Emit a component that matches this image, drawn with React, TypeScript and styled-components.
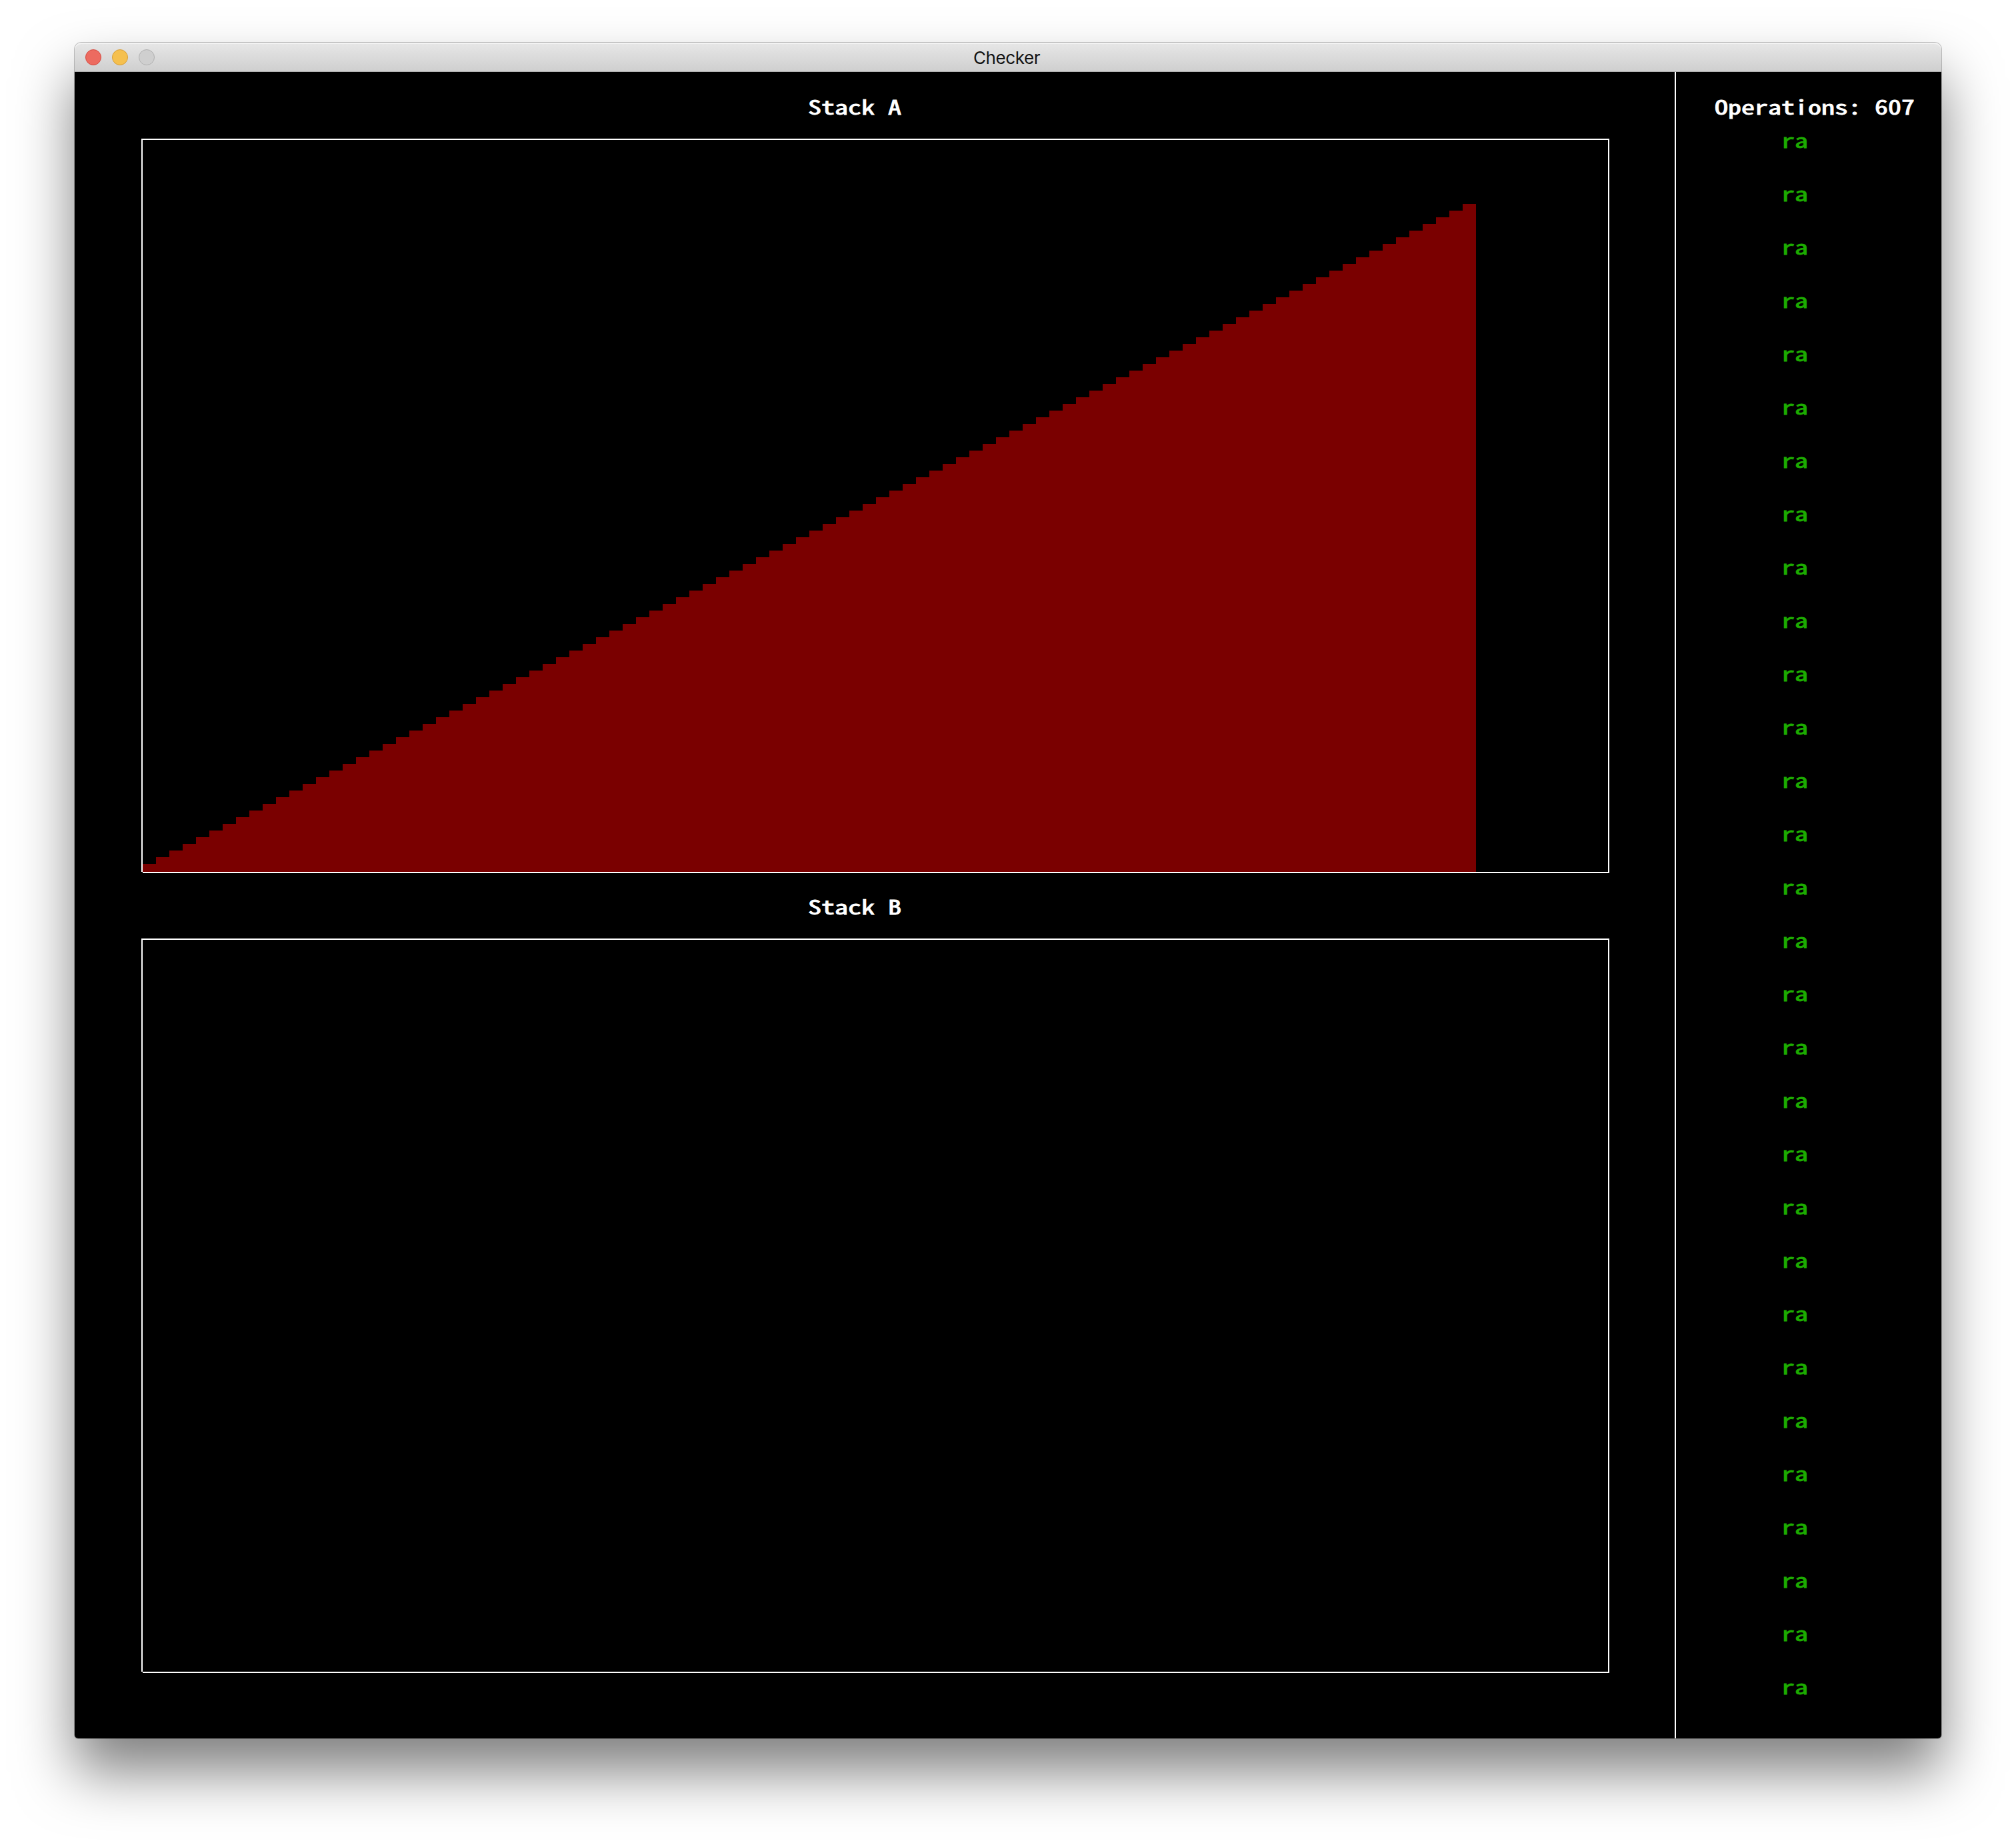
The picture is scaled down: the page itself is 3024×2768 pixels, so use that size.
import React from "react";
import styled, { createGlobalStyle } from "styled-components";

const GlobalStyle = createGlobalStyle`
  *, *::before, *::after { box-sizing: border-box; }
  body { margin: 0; background: #fff; }
`;

const Desktop = styled.div`
  width: 3024px;
  height: 2768px;
  padding: 64px 112px 160px;
  overflow: hidden;
  background: #fff;
`;

const Window = styled.main`
  display: flex;
  flex-direction: column;
  height: 2544px;
  border-radius: 10px 10px 5px 5px;
  box-shadow: 0 0 0 1px rgba(0, 0, 0, 0.24), 0 50px 86px rgba(0, 0, 0, 0.5);
`;

const TitleBar = styled.header`
  display: grid;
  grid-template-columns: 1fr auto 1fr;
  align-items: center;
  height: 44px;
  padding: 0 16px;
  border-radius: 10px 10px 0 0;
  border-bottom: 1px solid #adadad;
  background: linear-gradient(#e7e7e7, #cfcfcf);
  box-shadow: inset 0 2px 0 #f3f3f3;
`;

const Lights = styled.div`
  display: flex;
  gap: 16px;
`;

const Light = styled.span<{ $fill: string; $edge: string }>`
  width: 24px;
  height: 24px;
  border-radius: 50%;
  border: 1px solid ${(p) => p.$edge};
  background: ${(p) => p.$fill};
`;

const WindowTitle = styled.h1`
  margin: 0 4px 0 0;
  padding-top: 2px;
  font: 400 26px/40px Inter, "Liberation Sans", sans-serif;
  letter-spacing: -0.4px;
  color: #111;
`;

const Screen = styled.div`
  display: flex;
  height: 2500px;
  background: #000;
  border-radius: 0 0 5px 5px;
  overflow: hidden;
  font: 400 30px/30px "Noto Sans Mono CJK SC", "DejaVu Sans Mono", monospace;
  -webkit-text-stroke: 0.9px currentColor;
  white-space: pre;
`;

/* Terminal lettering: 15px cells widened to the 20px console grid. */
const Glyphs = styled.span`
  display: inline-block;
  vertical-align: top;
  transform: scaleX(1.3333);
  transform-origin: left top;
`;

const Stacks = styled.div`
  width: 2400px;
  padding-left: 100px;
`;

const StackSection = styled.section`
  height: 1200px;
`;

const StackTitle = styled.h2`
  height: 100px;
  margin: 0;
  padding: 36px 0 0 1000px;
  font: inherit;
  color: #fff;
`;

const Frame = styled.div`
  position: relative;
  display: flex;
  align-items: flex-end;
  width: 2202px;
  height: 1102px;
  border: 2px solid #fff;

  &::after {
    content: "";
    position: absolute;
    left: -2px;
    bottom: -2px;
    width: 2px;
    height: 2px;
    background: #000;
  }
`;

const Bar = styled.span`
  width: 20px;
  background: #7a0000;
`;

const Operations = styled.aside`
  width: 400px;
  border-left: 2px solid #fff;
  padding: 36px 0 0 58px;
`;

const OperationsTitle = styled.h2`
  height: 50px;
  margin: 0;
  font: inherit;
  color: #fff;
`;

const OperationList = styled.ul`
  margin: 0;
  padding: 0 0 0 100px;
  list-style: none;
`;

const Operation = styled.li`
  height: 80px;
  color: #1cab00;
`;

const stackA = Array.from({ length: 100 }, (_, i) => i + 1);
const stackB: number[] = [];
const recentOperations = Array.from({ length: 30 }, () => "ra");

function Stack({ name, values }: { name: string; values: number[] }) {
  return (
    <StackSection>
      <StackTitle>
        <Glyphs>{`Stack ${name}`}</Glyphs>
      </StackTitle>
      <Frame>
        {values.map((value) => (
          <Bar key={value} style={{ height: value * 10 + 2 }} />
        ))}
      </Frame>
    </StackSection>
  );
}

export default function App() {
  return (
    <Desktop>
      <GlobalStyle />
      <Window>
        <TitleBar>
          <Lights>
            <Light $fill="#ec6b60" $edge="#d5493f" />
            <Light $fill="#f5c04f" $edge="#d79e37" />
            <Light $fill="#cfcfcf" $edge="#b0b0b0" />
          </Lights>
          <WindowTitle>Checker</WindowTitle>
        </TitleBar>
        <Screen>
          <Stacks>
            <Stack name="A" values={stackA} />
            <Stack name="B" values={stackB} />
          </Stacks>
          <Operations>
            <OperationsTitle>
              <Glyphs>Operations: 607</Glyphs>
            </OperationsTitle>
            <OperationList>
              {recentOperations.map((op, i) => (
                <Operation key={i}>
                  <Glyphs>{op}</Glyphs>
                </Operation>
              ))}
            </OperationList>
          </Operations>
        </Screen>
      </Window>
    </Desktop>
  );
}
